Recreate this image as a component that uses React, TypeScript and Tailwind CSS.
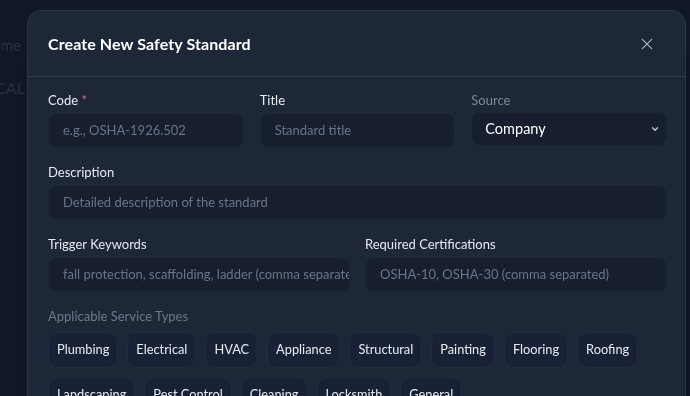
import React from 'react';

const serviceTypes = [
  'Plumbing',
  'Electrical',
  'HVAC',
  'Appliance',
  'Structural',
  'Painting',
  'Flooring',
  'Roofing',
  'Landscaping',
  'Pest Control',
  'Cleaning',
  'Locksmith',
  'General',
];

function Label({ children, muted = false }: { children: React.ReactNode; muted?: boolean }) {
  return (
    <label
      className={`block text-[13px] leading-[18px] mb-[4px] ${muted ? 'text-[#7d8799]' : 'text-[#e6e9ef]'}`}
    >
      {children}
    </label>
  );
}

function TextInput({ placeholder }: { placeholder: string }) {
  return (
    <div className="h-[35px] rounded-[9px] bg-[#161e30] border border-[#1d2638] px-[14px] flex items-center overflow-hidden">
      <span className="text-[13px] text-[#6b7587] whitespace-nowrap">{placeholder}</span>
    </div>
  );
}

export default function App() {
  return (
    <div
      className="relative w-[690px] h-[396px] overflow-hidden bg-[#111827]"
      style={{ fontFamily: 'Lato, "Open Sans", sans-serif' }}
    >
      {/* Page behind the dialog */}
      <div className="flex flex-col pt-[36px] text-[#2a3244] text-[15px] leading-[18px]">
        <span className="-ml-[18px]">Name</span>
        <span className="mt-[25px] -ml-[5px] text-[16px]">CAL</span>
      </div>

      {/* Dialog */}
      <div className="fixed inset-0 pl-[27px] pt-[10px]">
        <div className="w-[659px] rounded-[14px] bg-[#1e2738] border border-[#2b3446] shadow-2xl">
          {/* Header */}
          <div className="h-[66px] flex items-center justify-between pl-[20px] pr-[31px] border-b border-[#323c4e]">
            <h2 className="text-[16px] font-bold text-white tracking-[0.1px]">Create New Safety Standard</h2>
            <svg
              width="14"
              height="14"
              viewBox="0 0 24 24"
              fill="none"
              stroke="#aeb6c4"
              strokeWidth="2"
              strokeLinecap="round"
            >
              <path d="M4 4l16 16M20 4L4 20" />
            </svg>
          </div>

          {/* Body */}
          <div className="pl-[20px] pr-[18px] pt-[14px] flex flex-col gap-[15px]">
            <div className="grid grid-cols-3 gap-[16px]">
              <div>
                <Label>
                  Code <span className="text-[#d0717f]">*</span>
                </Label>
                <TextInput placeholder="e.g., OSHA-1926.502" />
              </div>
              <div>
                <Label>Title</Label>
                <TextInput placeholder="Standard title" />
              </div>
              <div>
                <Label muted>Source</Label>
                <div className="-mt-[1px] h-[34px] rounded-[9px] bg-[#161e30] border border-[#1d2638] pl-[13px] pr-[6px] flex items-center justify-between">
                  <span className="text-[14.5px] text-white">Company</span>
                  <svg
                    width="10"
                    height="10"
                    viewBox="0 0 24 24"
                    fill="none"
                    stroke="#c7ccd6"
                    strokeWidth="3"
                    strokeLinecap="round"
                    strokeLinejoin="round"
                  >
                    <path d="M6 9l6 6 6-6" />
                  </svg>
                </div>
              </div>
            </div>

            <div>
              <Label>Description</Label>
              <TextInput placeholder="Detailed description of the standard" />
            </div>

            <div className="grid grid-cols-2 gap-[15px]">
              <div>
                <Label>Trigger Keywords</Label>
                <TextInput placeholder="fall protection, scaffolding, ladder (comma separated)" />
              </div>
              <div>
                <Label>Required Certifications</Label>
                <TextInput placeholder="OSHA-10, OSHA-30 (comma separated)" />
              </div>
            </div>

            <div>
              <p className="text-[13px] leading-[18px] text-[#6f798b] mb-[7px]">Applicable Service Types</p>
              <div className="flex flex-wrap gap-[9px]">
                {serviceTypes.map((type) => (
                  <button
                    key={type}
                    className="h-[36px] px-[8px] rounded-[10px] bg-[#182136] border border-[#222c40] text-[12.8px] text-[#e8ebf0]"
                  >
                    {type}
                  </button>
                ))}
              </div>
            </div>
          </div>
          <div className="h-[40px]" />
        </div>
      </div>
    </div>
  );
}
